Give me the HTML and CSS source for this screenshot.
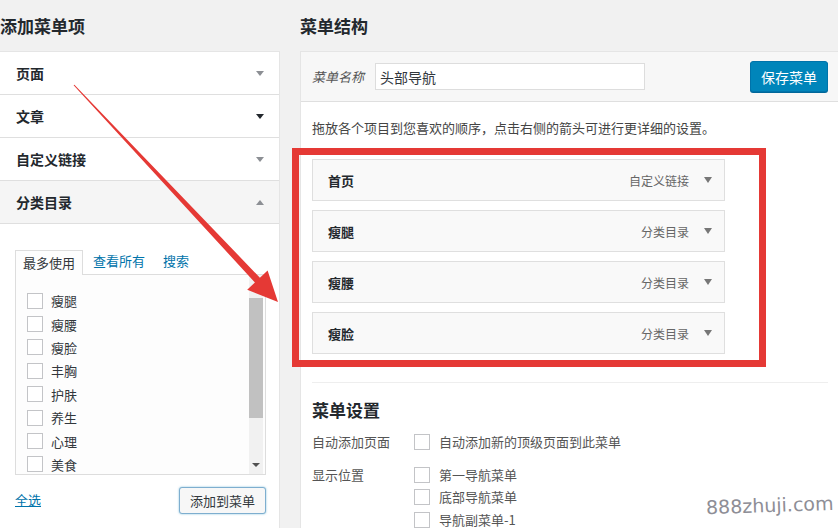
FILE: index.html
```html
<!DOCTYPE HTML>
<html>
<head>
<meta charset="utf-8">
<title>菜单</title>
<link rel="stylesheet" href="styles.css">
</head>
<body>
<div class="page">
 <div class="col-left">
  <h2 class="title">添加菜单项</h2>
  <div class="acc">
   <div class="acc-row"><span>页面</span><i class="tri"></i></div>
   <div class="acc-row hover"><span>文章</span><i class="tri"></i></div>
   <div class="acc-row"><span>自定义链接</span><i class="tri"></i></div>
   <div class="acc-row open"><span>分类目录</span><i class="tri up"></i></div>
   <div class="acc-body">
    <ul class="tabs">
     <li class="active">最多使用</li>
     <li><a href="#">查看所有</a></li>
     <li><a href="#">搜索</a></li>
    </ul>
    <div class="listbox">
     <ul class="checklist">
      <li><span class="cb"></span>瘦腿</li>
      <li><span class="cb"></span>瘦腰</li>
      <li><span class="cb"></span>瘦脸</li>
      <li><span class="cb"></span>丰胸</li>
      <li><span class="cb"></span>护肤</li>
      <li><span class="cb"></span>养生</li>
      <li><span class="cb"></span>心理</li>
      <li><span class="cb"></span>美食</li>
     </ul>
     <div class="sbar"><div class="thumb"></div><i class="sdown"></i></div>
    </div>
    <div class="acc-foot">
     <a href="#" class="selall">全选</a>
     <button class="btn">添加到菜单</button>
    </div>
   </div>
  </div>
 </div>
 <div class="col-right">
  <h2 class="title">菜单结构</h2>
  <div class="menu-box">
   <div class="menu-head">
    <label class="name-label">菜单名称</label>
    <input class="name-input" value="头部导航">
    <button class="btn-primary">保存菜单</button>
   </div>
   <div class="menu-body">
    <p class="hint">拖放各个项目到您喜欢的顺序，点击右侧的箭头可进行更详细的设置。</p>
    <ul class="items">
     <li><b>首页</b><span class="type">自定义链接</span><i class="tri"></i></li>
     <li><b>瘦腿</b><span class="type">分类目录</span><i class="tri"></i></li>
     <li><b>瘦腰</b><span class="type">分类目录</span><i class="tri"></i></li>
     <li><b>瘦脸</b><span class="type">分类目录</span><i class="tri"></i></li>
    </ul>
    <div class="settings">
     <h3>菜单设置</h3>
     <div class="set-row">
      <div class="set-label">自动添加页面</div>
      <div class="set-opts">
       <div class="opt"><span class="cb"></span>自动添加新的顶级页面到此菜单</div>
      </div>
     </div>
     <div class="set-row">
      <div class="set-label">显示位置</div>
      <div class="set-opts">
       <div class="opt"><span class="cb"></span>第一导航菜单</div>
       <div class="opt"><span class="cb"></span>底部导航菜单</div>
       <div class="opt"><span class="cb"></span>导航副菜单-1</div>
      </div>
     </div>
    </div>
   </div>
  </div>
 </div>
</div>

<div class="mark-box"></div>
<svg class="arrow" width="838" height="528" viewBox="0 0 838 528">
 <polygon points="74.4,84.7 259.9,277.7 267.6,270.5 278,302 247.2,289.7 254.9,282.5 73.6,85.3" fill="#e53935"/>
</svg>
<div class="watermark">888zhuji.com</div>
</body>
</html>
```

FILE: styles.css
```css
html,body{
	margin:0;
	height:100%;
	overflow:hidden;
}
body{
	background:#f1f1f1;
	color:#23282d;
	font-family:"Noto Sans CJK SC","Liberation Sans",sans-serif;
	font-size:13px;
	position:relative;
}
ul{ list-style:none; margin:0; padding:0; }
a{ color:#0073aa; text-decoration:none; }

.page{
	display:flex;
	gap:20px;
}
.col-left{ width:280px; flex:none; }
.col-right{ flex:1; }

.title{
	height:51px;
	margin:0;
	display:flex;
	align-items:center;
	font-size:17px;
	font-weight:700;
	color:#23282d;
}

/* left accordion */
.acc{
	background:#fff;
	border-top:1px solid #e5e5e5;
	border-right:1px solid #e5e5e5;
}
.acc-row{
	height:43px;
	box-sizing:border-box;
	border-bottom:1px solid #dfdfdf;
	display:flex;
	align-items:center;
	justify-content:space-between;
	padding:0 15px 0 16px;
	font-size:14px;
	font-weight:700;
}
.acc-row.open{ background:#f5f5f5; }
.tri{
	display:block;
	width:0;
	height:0;
	border-left:4px solid transparent;
	border-right:4px solid transparent;
	border-top:5px solid #8c8f94;
}
.tri.up{
	border-top:0;
	border-bottom:5px solid #8c8f94;
}
.hover .tri{ border-top-color:#23282d; }

.acc-body{
	padding:25px 13px 20px 15px;
}
.tabs{
	display:flex;
	height:25px;
}
.tabs li{
	padding:0 8px;
	line-height:23px;
	margin-right:2px;
}
.tabs li.active{
	border:1px solid #ddd;
	border-bottom:0;
	background:#fdfdfd;
	padding:0 7px;
	color:#32373c;
	position:relative;
	top:1px;
}
.listbox{
	height:201px;
	box-sizing:border-box;
	border:1px solid #ddd;
	background:#fdfdfd;
	display:flex;
}
.checklist{
	flex:1;
	padding:14px 0 0 11px;
	overflow:hidden;
	color:#32373c;
}
.checklist li{
	height:23.4px;
	display:flex;
	align-items:center;
	gap:8px;
}
.cb{
	width:16px;
	height:16px;
	box-sizing:border-box;
	border:1px solid #c3c4c7;
	background:#fff;
	flex:none;
}
.sbar{
	width:14px;
	margin-right:2px;
	background:#f1f1f1;
	display:flex;
	flex-direction:column;
	align-items:center;
}
.thumb{
	margin-top:23px;
	width:14px;
	height:120px;
	background:#c1c1c1;
}
.sdown{
	margin-top:auto;
	margin-bottom:7px;
	width:0;
	height:0;
	border-left:4px solid transparent;
	border-right:4px solid transparent;
	border-top:4px solid #505050;
}
.acc-foot{
	margin-top:12px;
	display:flex;
	justify-content:space-between;
	align-items:center;
}
.selall{ text-decoration:underline; font-size:13px; margin-top:-3px; }
.btn{
	height:27px;
	padding:0 10px;
	font:13px "Noto Sans CJK SC",sans-serif;
	color:#32373c;
	background:#f7f7f7;
	border:1px solid #7eaecf;
	border-radius:3px;
	box-shadow:0 0 2px rgba(30,140,190,.6);
}

/* right */
.menu-box{
	background:#fff;
	border-top:1px solid #e5e5e5;
	border-left:1px solid #e5e5e5;
	min-height:480px;
}
.menu-head{
	height:50px;
	box-sizing:border-box;
	background:#f7f7f7;
	border-bottom:1px solid #dfdfdf;
	display:flex;
	align-items:center;
	padding:0 10px 0 11px;
}
.name-label{
	font-style:italic;
	color:#555;
	margin-right:11px;
}
.name-input{
	width:270px;
	height:27px;
	box-sizing:border-box;
	border:1px solid #ddd;
	padding:0 4px;
	font:14px "Noto Sans CJK SC",sans-serif;
	color:#32373c;
}
.btn-primary{
	margin-left:auto;
	width:78px;
	height:31px;
	background:#0085ba;
	border:1px solid #0073aa;
	border-radius:3px;
	color:#fff;
	font:14px "Noto Sans CJK SC",sans-serif;
	box-shadow:0 1px 0 #006799;
}
.menu-body{
	padding:16px 10px 0 11px;
}
.hint{
	margin:0;
	line-height:20px;
	color:#444;
}
.items{
	margin-top:21px;
	width:413px;
}
.items li{
	height:42px;
	box-sizing:border-box;
	border:1px solid #dfdfdf;
	background:#f9f9f9;
	margin-bottom:9px;
	display:flex;
	align-items:center;
	padding:0 12px 0 15px;
}
.items b{ font-size:13px; flex:1; }
.items .type{ font-size:12px; color:#666; margin-right:15px; }
.items .tri{ border-left-width:4.5px; border-right-width:4.5px; border-top:6px solid #777; }

.settings{
	margin-top:28px;
	border-top:1px solid #eee;
	padding-top:15px;
}
.settings h3{
	margin:0;
	font-size:17px;
	line-height:24px;
}
.set-row{
	display:flex;
	margin-top:9px;
	line-height:22px;
	color:#555;
}
.set-row + .set-row{ margin-top:10px; }
.set-label{ width:102px; flex:none; }
.opt{
	display:flex;
	align-items:center;
	gap:9px;
	height:22.5px;
}

/* annotations over the screenshot */
.mark-box{
	position:absolute;
	left:292px;
	top:148px;
	width:474px;
	height:219px;
	box-sizing:border-box;
	border:7px solid #e53935;
}
.arrow{
	position:absolute;
	left:0;
	top:0;
	pointer-events:none;
}
.watermark{
	position:absolute;
	left:706px;
	top:494px;
	font:19px "DejaVu Sans",sans-serif;
	color:#8e8e96;
	transform:rotate(-2deg);
}
```
